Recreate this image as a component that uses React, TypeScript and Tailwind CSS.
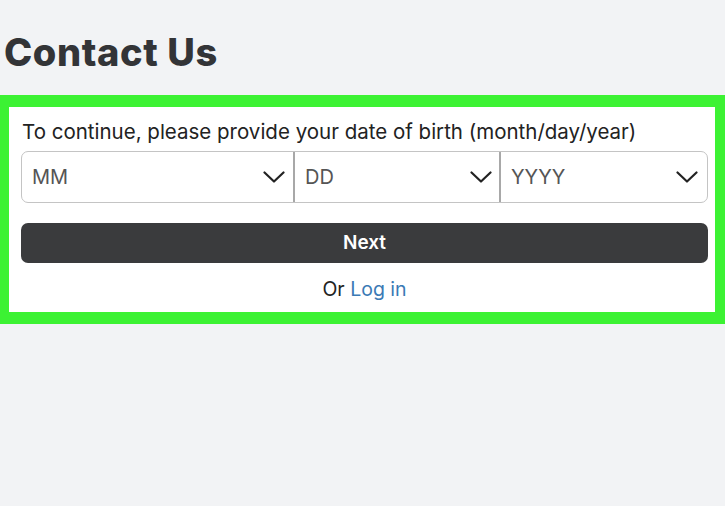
import React from "react";

function Chevron() {
  return (
    <svg width="22" height="12" viewBox="0 0 22 12" fill="none" className="shrink-0">
      <path d="M1.5 1.5 L11 10.5 L20.5 1.5" stroke="#222" strokeWidth="2.2" strokeLinecap="round" strokeLinejoin="round" />
    </svg>
  );
}

export default function App() {
  return (
    <div className="w-[725px] h-[506px] bg-[#f2f3f5] overflow-hidden" style={{ fontFamily: "Inter, 'Open Sans', sans-serif" }}>
      <div className="pt-[30px] pl-[4px] h-[95px]">
        <h1 className="text-[38px] leading-[44px] font-extrabold text-[#333437] tracking-[0.6px]">Contact Us</h1>
      </div>
      <div className="bg-[#3cf233] pt-[12px] pl-[9px] pr-[10px] pb-[12px]">
        <div className="bg-white pl-[12px] pr-[7px] pt-[12px] pb-[10px]">
          <p className="text-[20.5px] leading-[26px] text-[#222] pl-[1px]">To continue, please provide your date of birth (month/day/year)</p>
          <div className="mt-[6px] flex h-[52px] border border-[#c4c4c4] rounded-[7px]">
            <div className="w-[273px] flex items-center justify-between pl-[10px] pr-[8px] border-r-2 border-[#a8a8a8]">
              <span className="text-[20px] text-[#555]">MM</span>
              <Chevron />
            </div>
            <div className="w-[206px] flex items-center justify-between pl-[10px] pr-[7px] border-r-2 border-[#a8a8a8]">
              <span className="text-[20px] text-[#555]">DD</span>
              <Chevron />
            </div>
            <div className="flex-1 flex items-center justify-between pl-[10px] pr-[9px]">
              <span className="text-[20px] text-[#555]">YYYY</span>
              <Chevron />
            </div>
          </div>
          <button className="mt-[20px] w-full h-[40px] rounded-[7px] bg-[#3a3b3d] text-white text-[19px] font-semibold">Next</button>
          <div className="mt-[13px] text-center text-[19.5px] leading-[26px] text-[#222]">
            Or <span className="text-[#3b7ab5]">Log in</span>
          </div>
        </div>
      </div>
    </div>
  );
}
